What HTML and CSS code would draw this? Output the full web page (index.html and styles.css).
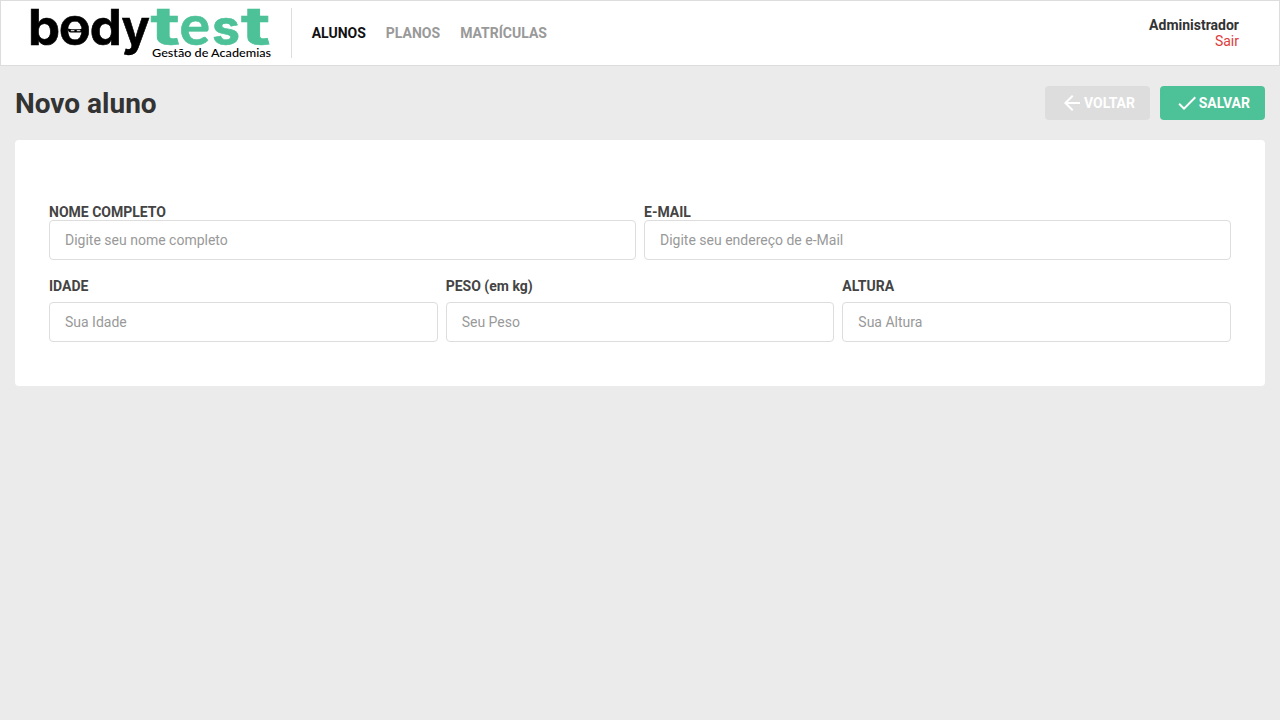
FILE: index.html
```html
<!DOCTYPE html>
<html lang="pt-BR">
<head>
<meta charset="utf-8">
<title>Bodytest - Novo aluno</title>
<link rel="stylesheet" href="styles.css">
</head>
<body>
<header class="header">
  <nav class="nav">
    <svg class="logo" width="241" height="50" viewBox="0 0 241 50">
      <g class="word-body">
        <text transform="translate(-2.9 36.5) scale(1.04 1)">b</text>
        <text class="round" transform="translate(28.1 36.5)">o</text>
        <text transform="translate(58.8 36.5) scale(1.04 1)">d</text>
        <text transform="translate(90.5 36.5) scale(.96 1)">y</text>
      </g>
      <g class="word-test">
        <text transform="translate(119.5 36.5) scale(1.64 1.1)">t</text>
        <text class="round" transform="translate(148.6 36.5) scale(1.04 1)">e</text>
        <text transform="translate(181 36.5) scale(1.02 1)">s</text>
        <text transform="translate(210 36.5) scale(1.64 1.1)">t</text>
      </g>
      <path class="mask" d="M36.5 20.4Q44.5 22.2 52.5 20.4Q52 24.5 49 24.5H40Q37 24.5 36.5 20.4Z"/>
      <path class="eyes" d="M39.8 22.7h3.6M45.8 22.7h3.6"/>
      <text class="tagline" x="121" y="49" textLength="119" lengthAdjust="spacingAndGlyphs">Gestão de Academias</text>
    </svg>
    <div class="menu">
      <a class="menu-link active">ALUNOS</a>
      <a class="menu-link">PLANOS</a>
      <a class="menu-link">MATRÍCULAS</a>
    </div>
  </nav>
  <div class="profile">
    <strong>Administrador</strong>
    <a class="logout">Sair</a>
  </div>
</header>
<main class="content">
  <div class="toolbar">
    <h1 class="title">Novo aluno</h1>
    <div class="actions">
      <button class="btn btn-back"><svg width="24" height="24" viewBox="0 0 24 24"><path d="M20 11H7.83l5.59-5.59L12 4l-8 8 8 8 1.41-1.41L7.83 13H20v-2z"/></svg>VOLTAR</button>
      <button class="btn btn-save"><svg width="24" height="24" viewBox="0 0 24 24"><path d="M9 16.17L4.83 12l-1.42 1.41L9 19 21 7l-1.41-1.41z"/></svg>SALVAR</button>
    </div>
  </div>
  <form class="card">
    <div class="row">
      <label class="field">NOME COMPLETO<input class="input" placeholder="Digite seu nome completo"></label>
      <label class="field">E-MAIL<input class="input" placeholder="Digite seu endereço de e-Mail"></label>
    </div>
    <div class="row row-small">
      <label class="field">IDADE<input class="input" placeholder="Sua Idade"></label>
      <label class="field">PESO (em kg)<input class="input" placeholder="Seu Peso"></label>
      <label class="field">ALTURA<input class="input" placeholder="Sua Altura"></label>
    </div>
  </form>
</main>
</body>
</html>
```
FILE: styles.css
```css
* { box-sizing: border-box; margin: 0; padding: 0; }
body { background: #ebebeb; font: 14px/16px Roboto, sans-serif; color: #333; }
.header { display: flex; justify-content: space-between; align-items: center; height: 66px; padding: 0 40px 0 30px; background: #fff; border: 1px solid #ddd; }
.nav { display: flex; align-items: center; }
.logo { display: block; overflow: visible; }
.word-body, .word-test { font: 700 49px Inter, sans-serif; }
.word-body .round, .word-test .round { font: 700 55px Lato, sans-serif; }
.word-body { fill: #000; stroke: #000; stroke-width: .6; }
.word-test { fill: #4dc198; stroke: #4dc198; stroke-width: .6; }
.mask { fill: #000; }
.eyes { stroke: #fff; stroke-width: 1; }
.tagline { font: 500 11.5px Lato, sans-serif; fill: #000; }
.menu { display: flex; align-items: center; gap: 20px; height: 50px; margin-left: 18.7px; padding-left: 20px; border-left: 1px solid #ddd; }
.menu-link { font-weight: 700; color: #999; }
.menu-link.active { color: #111; }
.profile { display: flex; flex-direction: column; align-items: flex-end; }
.logout { color: #de3b3b; }
.content { padding: 20px 15px; }
.toolbar { display: flex; justify-content: space-between; align-items: center; height: 34px; margin-bottom: 20px; }
.title { padding-top: 2px; font-size: 28px; line-height: 34px; }
.actions { display: flex; gap: 10px; }
.btn { display: flex; align-items: center; justify-content: flex-end; width: 105px; height: 34px; padding-right: 15px; border: 0; border-radius: 4px; color: #fff; font: 700 14px Roboto, sans-serif; }
.btn svg { fill: currentColor; }
.btn-back { background: #ddd; }
.btn-save { background: #4dc198; }
.card { height: 246px; padding: 64px 34px 0; background: #fff; border-radius: 4px; }
.row { display: flex; gap: 8px; }
.row-small { margin-top: 18px; }
.field { display: flex; flex: 1; flex-direction: column; min-width: 0; font-weight: 700; color: #444; }
.row-small .field { gap: 8px; }
.input { width: 100%; height: 40px; padding: 0 15px; border: 1px solid #ddd; border-radius: 4px; background: #fff; font: 14px Roboto, sans-serif; }
.input::placeholder { color: #999; }
```
